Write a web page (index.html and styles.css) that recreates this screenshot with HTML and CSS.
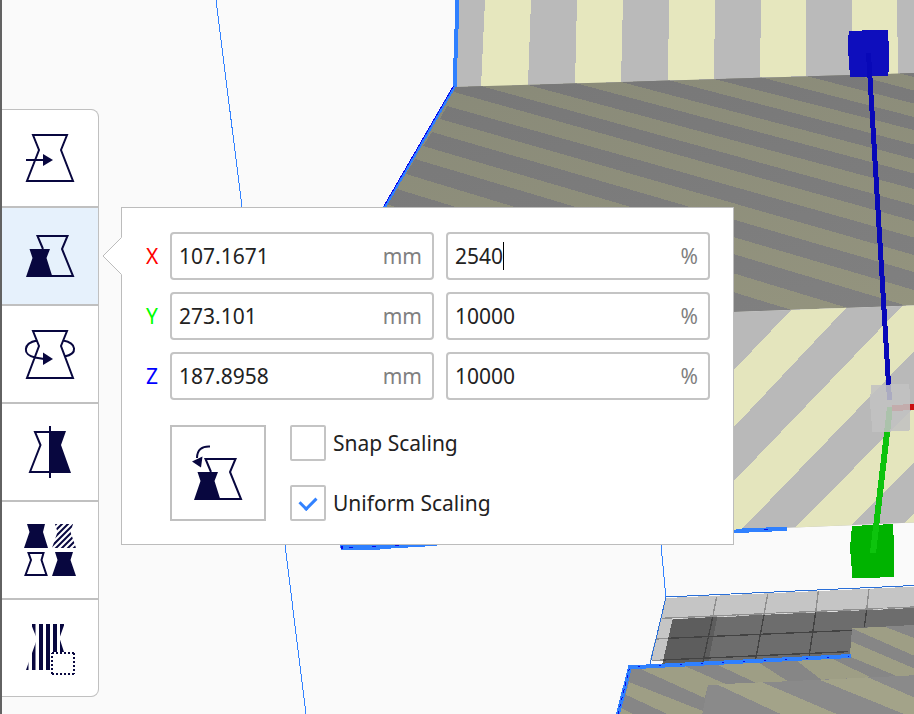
FILE: index.html
```html
<!DOCTYPE html>
<html lang="en">
<head>
<meta charset="utf-8">
<title>Scale tool</title>
<link rel="stylesheet" href="styles.css">
</head>
<body>
<svg class="scene" viewBox="0 0 914 714" preserveAspectRatio="xMinYMin slice" aria-hidden="true">
  <defs>
    <clipPath id="slope"><path d="M454 87 914 73V305.500L733 312V400H300V207H384Z"/></clipPath>
    <clipPath id="base"><path d="M733 312 914 305.500V522.500L733 530Z"/></clipPath>
    <linearGradient id="olive" x1="0" y1="0" x2="0.300" y2="1"><stop offset="0" stop-color="#888978"/><stop offset="1" stop-color="#95957f"/></linearGradient>
    <linearGradient id="dark" x1="0" y1="0" x2="0.300" y2="1"><stop offset="0" stop-color="#777"/><stop offset="1" stop-color="#808080"/></linearGradient>
  </defs>
  <!-- build volume edges -->
  <path class="edge" d="M216 0 242 207M285 545 306 714M661 545 666 598"/>
  <!-- upright face -->
  <path fill="#bababa" d="M458 0H914V74L454 88Z"/>
  <path fill="#e6e7be" d="M485 0H531L528 85 481 86.500ZM577 0H623L621 82 575 83.500ZM669 0H715L714 79 668 80.500ZM761 0H806V76L760 77.500ZM852 0H897L898 73.500 852 75Z"/>
  <!-- sloped face -->
  <g clip-path="url(#slope)">
    <path fill="url(#olive)" d="M380 60H920V420H380Z"/>
    <path fill="url(#dark)" d="M898 73 914 77V70ZM806 76 852 74 914 90.500V103.500ZM714 79 760 77 914 117V130ZM621 82 668 80 914 144.500V159ZM528 85 575 83 914 173.500V189ZM454 87 481 86 914 205V221L454 92ZM447 106 914 237.500V255L440 119ZM432 132 914 272V290L423 146ZM415 159 914 308V328L406 174ZM397 189 914 347.500V370L386 204Z"/>
  </g>
  <!-- lower face -->
  <g clip-path="url(#base)">
    <path fill="#b9b9b9" d="M733 300H914V540H733Z"/>
    <path fill="#e4e5bd" d="M791 310 847 307 734 427 733 371ZM903 305 914 294V351L742 529 733 538V482ZM795 528 914 407V462L850 527ZM904 524 914 513V530Z"/>
  </g>
  <path fill="#2f80ff" d="M733 530 745 528 787 527V530.500L765 532 733 533ZM340 545H443L419 547 397 548 374 550H341Z"/>
  <path fill="#0909e8" d="M341 546H343V549H341ZM349 547H353V548H349ZM372 546H376V547H372ZM395 545H399V546H395ZM764 529H768V530H764Z"/>
  <!-- build plate -->
  <g transform="translate(600 520) scale(.3333)">
    <path fill="#c5c5c5" d="M198 234 942 200V420H150Z"/>
    <path fill="#6d6d6d" d="M218 297 942 264V420L187 432Z"/>
    <path fill="#5d5d5d" d="M218 297 352 291 325 427 187 432Z"/>
    <path fill="none" stroke="#8f8f8f" stroke-width="4" d="M350 230 338 292M503 222 492 285M655 214 647 277M807 207 800 270M186 295 942 261M168 357 204 355M155 422 190 420"/>
    <path fill="none" stroke="#434343" stroke-width="4" d="M338 292 308 430M492 285 467 418M647 277 627 412M800 270 793 322M204 355 755 331M190 420 745 395"/>
    <path fill="none" stroke="#eee" stroke-width="2" d="M216 297 265 295M372 289 410 288M525 281 560 280M680 275 715 273M835 268 865 266"/>
  </g>
  <path class="edge edge-dark" d="M650 664 666 597 914 585.500"/>
  <!-- front object -->
  <g transform="translate(614 614) scale(.3333)">
    <path fill="#868686" d="M50 160 708 126 714 43 900 33V300H12Z"/>
    <path fill="#9e9e85" d="M75 163 210 155 335 210 282 213 272 252ZM45 204 272 293 268 300H160L35 242ZM22 283 58 300H14ZM305 150 430 143 522 202 425 206ZM545 138 650 132 770 190 622 197ZM714 43 812 38 900 72V125ZM711 82 900 163V184L848 186 708 128Z"/>
    <path fill="#8a8a8a" d="M282 213 900 184V300H265Z"/>
    <path fill="#a3a389" d="M308 211 445 205 668 300H500ZM618 198 762 190 900 250V300H870Z"/>
    <path fill="none" stroke="#2f80ff" stroke-width="12" d="M12 300 48 160 710 126"/>
    <path fill="none" stroke="#0909e8" stroke-width="3" stroke-dasharray="10 12" d="M12 300 46 165"/>
    <path fill="none" stroke="#0909e8" stroke-width="3" stroke-dasharray="6 57" d="M72 158 705 126"/>
  </g>
  <path fill="none" stroke="#2f80ff" stroke-width="4" d="M457.500 0 454.500 87"/>
  <path fill="none" stroke="#2f80ff" stroke-width="3" d="M454 87 384 208"/>
  <path fill="none" stroke="#0808f0" stroke-width="1" d="M453.500 86 384 206"/>
  <!-- scale handles -->
  <path fill="#0e0ebd" d="M849 31 888 29.500 889.500 64 888 76 850 77 847.500 42Z"/>
  <path fill="none" stroke="#0808b8" stroke-width="5" d="M868.500 53 889.500 400"/>
  <path fill="#00b300" d="M852 526 893 524 894.500 555 893.500 577 852.500 578.500 850 548Z"/>
  <path fill="none" stroke="#0dc30d" stroke-width="6" d="M890 407 873 553"/>
  <path fill="none" stroke="#c91010" stroke-width="6" d="M892 408 914 407"/>
  <path fill="#c1c1c1" fill-opacity=".88" d="M871 385 909 384 910.500 400 909.500 430.500 872.500 432.500 870 403Z"/>
</svg>

<main class="workspace">
  <nav class="toolbar" aria-label="Tools">
    <button class="tool" type="button" aria-label="Move">
      <svg class="icon" viewBox="0 0 60 60"><path class="line" d="M13 7H47L41 22 53 53H7L19 22ZM6 32H24"/><path d="M23 26 33 32 23 38Z"/></svg>
    </button>
    <button class="tool tool-active" type="button" aria-label="Scale" aria-pressed="true">
      <svg class="icon" viewBox="0 0 60 60"><path class="line" d="M23 23 17.500 10H47.500L42 23 53 50H28"/><path d="M9.500 23H30L26.500 32 32.500 51H6L12.500 32Z"/></svg>
    </button>
    <button class="tool" type="button" aria-label="Rotate">
      <svg class="icon" viewBox="0 0 60 60"><path class="line" d="M13 7H47L41 22 53 54H7L19 22ZM17 16.500C3 19 2 31 15 33.500L24 35M43 16.500C57 19 58 30 44.500 32.500"/><path d="M23 28.500 33 35 23 41Z"/></svg>
    </button>
    <button class="tool" type="button" aria-label="Mirror">
      <svg class="icon" viewBox="0 0 60 60"><path class="line" d="M30 10H15L20.500 23 10 50H30M30 4V56"/><path d="M30 9H46L41 23 51 51H30Z"/></svg>
    </button>
    <button class="tool" type="button" aria-label="Per model settings">
      <svg class="icon" viewBox="0 0 60 60">
        <clipPath id="hatch"><path d="M35 4H53L50.500 12 56 28H32L37.500 12Z"/></clipPath>
        <path d="M7 4H25L23 12 28 28H4L9.500 12ZM35 32H53L50.500 40 56 56H32L37.500 40Z"/>
        <path class="line" d="M8.500 33H23.500L21.500 40 26.500 55H5.500L11 40Z"/>
        <path class="line" clip-path="url(#hatch)" d="M30 10 38 2M30 16 44 2M30 22 50 2M30 28 56 2M32 32 58 6M38 32 60 10M44 32 60 16M50 32 60 22"/>
      </svg>
    </button>
    <button class="tool" type="button" aria-label="Support blocker">
      <svg class="icon" viewBox="0 0 60 60">
        <clipPath id="bars"><path d="M11 6H44.500L39.500 20 44 34H31V52H6L17 21Z"/></clipPath>
        <path clip-path="url(#bars)" d="M5 6H8.500V52H5ZM12 6H15.500V52H12ZM19 6H23V52H19ZM26 6H30V52H26ZM33 6H37V34H33ZM40 6H44V34H40Z"/>
        <path class="line dots" d="M32 35H54M54 35V56M54 56H32M32 56V35"/>
      </svg>
    </button>
  </nav>

  <form class="panel">
    <svg class="pointer" viewBox="0 0 20 38" aria-hidden="true"><path fill="#fff" d="M20 0 1 19 20 38Z"/><path fill="none" stroke="#bcbcbc" d="M19.500 .5 1 19 19.500 37.500"/></svg>
    <div class="row">
      <label class="axis axis-x" for="x-size">X</label>
      <div class="field"><input id="x-size" type="text" value="107.1671"><span class="unit">mm</span></div>
      <div class="field"><input type="text" value="2540" aria-label="X percent"><span class="caret"></span><span class="unit">%</span></div>
    </div>
    <div class="row">
      <label class="axis axis-y" for="y-size">Y</label>
      <div class="field"><input id="y-size" type="text" value="273.101"><span class="unit">mm</span></div>
      <div class="field"><input type="text" value="10000" aria-label="Y percent"><span class="unit">%</span></div>
    </div>
    <div class="row">
      <label class="axis axis-z" for="z-size">Z</label>
      <div class="field"><input id="z-size" type="text" value="187.8958"><span class="unit">mm</span></div>
      <div class="field"><input type="text" value="10000" aria-label="Z percent"><span class="unit">%</span></div>
    </div>
    <div class="options">
      <button class="reset" type="button" aria-label="Reset scale">
        <svg class="icon" viewBox="0 0 60 60"><path class="line" d="M23 29 17.500 16H47.500L42 29 53 56H28M22 3.500C14 3 9 7 9 15"/><path d="M9.500 29H30L26.500 38 32.500 57H6L12.500 38ZM4 18.500 14.500 13.500 13 24.500Z"/></svg>
      </button>
      <div class="checks">
        <label class="check"><input type="checkbox">Snap Scaling</label>
        <label class="check"><input type="checkbox" checked>Uniform Scaling</label>
      </div>
    </div>
  </form>
</main>
</body>
</html>
```
FILE: styles.css
```css
* {
  box-sizing: border-box;
}

body {
  margin: 0;
  min-height: 100vh;
  overflow: hidden;
  background: #fafafa;
  color: #222;
  font: 21px/28px "Noto Sans", sans-serif;
}

.scene {
  position: fixed;
  inset: 0;
  width: 100%;
  height: 100%;
  shape-rendering: crispEdges;
}

.edge {
  fill: none;
  stroke: #3282ff;
  stroke-width: 1;
}

.edge-dark {
  stroke: #2a6fd8;
}

.workspace {
  position: relative;
  display: flex;
  align-items: flex-start;
  gap: 22px;
  min-height: 100vh;
  padding-top: 109px;
  border-left: 2px solid #626262;
}

.toolbar {
  display: grid;
  gap: 2px;
  flex: none;
  overflow: hidden;
  border: 1px solid #c0c0c0;
  border-left: 0;
  border-radius: 0 8px 8px 0;
  background: #c0c0c0;
}

.tool {
  display: grid;
  place-items: center;
  width: 96px;
  height: 96px;
  padding: 0;
  border: 0;
  background: #fff;
}

.tool-active {
  background: #e6f1fc;
}

.icon {
  width: 60px;
  height: 60px;
  fill: #08073f;
}

.line {
  fill: none;
  stroke: #08073f;
  stroke-width: 2;
}

.dots {
  stroke-dasharray: 2 2;
}

.panel {
  position: relative;
  display: grid;
  grid-template-columns: minmax(0, 1fr);
  gap: 12px;
  flex: 0 1 613px;
  min-width: 0;
  margin-top: 98px;
  padding: 24px 23px 23px 24px;
  border: 1px solid #bcbcbc;
  background: #fff;
}

.pointer {
  position: absolute;
  top: 29px;
  left: -20px;
  width: 20px;
  height: 38px;
}

.row {
  display: grid;
  grid-template-columns: 12px minmax(0, 1fr) minmax(0, 1fr);
  gap: 12px;
  align-items: center;
}

.axis-x {
  color: #f00;
}

.axis-y {
  color: #0f0;
}

.axis-z {
  color: #00f;
}

.field {
  position: relative;
  display: flex;
  align-items: center;
  height: 48px;
  padding: 0 10px 0 7px;
  border: 2px solid #c4c4c4;
  border-radius: 4px;
  background: #fff;
}

.field input {
  flex: 1;
  min-width: 0;
  padding: 0;
  border: 0;
  outline: 0;
  background: none;
  color: inherit;
  font: inherit;
}

.caret {
  position: absolute;
  top: 8px;
  left: calc(7px + 4ch);
  width: 1px;
  height: 28px;
  background: #000;
}

.unit {
  color: #808080;
}

.options {
  display: flex;
  gap: 24px;
  padding: 13px 0 0 24px;
}

.reset {
  display: grid;
  place-items: center;
  width: 96px;
  height: 96px;
  padding: 0;
  border: 2px solid #c0c0c0;
  background: #fff;
}

.checks {
  display: grid;
  gap: 24px;
}

.check {
  display: flex;
  align-items: center;
  gap: 7px;
  height: 36px;
}

.check input {
  display: grid;
  place-items: center;
  width: 36px;
  height: 36px;
  margin: 0;
  border: 2px solid #c4c4c4;
  border-radius: 2px;
  background: #fff;
  appearance: none;
}

.check input:checked::before {
  width: 13px;
  height: 8px;
  border: solid #3282ff;
  border-width: 0 0 3px 3px;
  content: "";
  transform: translateY(-2px) rotate(-45deg);
}
```
